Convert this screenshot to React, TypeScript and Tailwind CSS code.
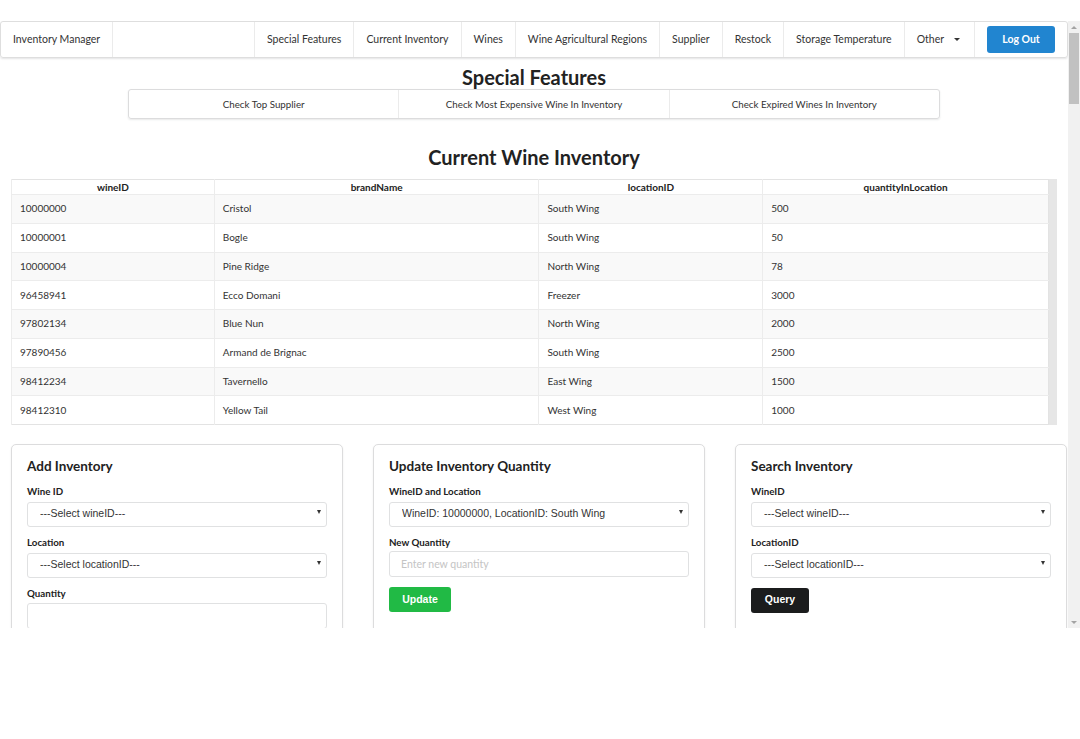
const navLinks = [
  'Special Features',
  'Current Inventory',
  'Wines',
  'Wine Agricultural Regions',
  'Supplier',
  'Restock',
  'Storage Temperature',
];

const features = ['Check Top Supplier', 'Check Most Expensive Wine In Inventory', 'Check Expired Wines In Inventory'];

const inventory = [
  ['10000000', 'Cristol', 'South Wing', '500'],
  ['10000001', 'Bogle', 'South Wing', '50'],
  ['10000004', 'Pine Ridge', 'North Wing', '78'],
  ['96458941', 'Ecco Domani', 'Freezer', '3000'],
  ['97802134', 'Blue Nun', 'North Wing', '2000'],
  ['97890456', 'Armand de Brignac', 'South Wing', '2500'],
  ['98412234', 'Tavernello', 'East Wing', '1500'],
  ['98412310', 'Yellow Tail', 'West Wing', '1000'],
];

const columns = [
  { name: 'wineID', width: 'w-[203px]' },
  { name: 'brandName', width: 'w-[325px]' },
  { name: 'locationID', width: 'w-[224px]' },
  { name: 'quantityInLocation', width: 'w-[286px]' },
];

const arial = { fontFamily: '"Liberation Sans", Arial, sans-serif' };

function Label({ children }: { children: React.ReactNode }) {
  return <div className="text-[9.75px] font-bold text-[#222] leading-none mb-[3px]">{children}</div>;
}

function Select({ value }: { value: string }) {
  return (
    <div className="relative">
      <select
        defaultValue={value}
        className="appearance-none w-full h-[25px] border border-[#e0e1e2] rounded-[3px] bg-white pl-[12px] pr-6 text-[10.5px] text-[#333] outline-none"
        style={arial}
      >
        <option>{value}</option>
      </select>
      <span className="absolute right-[6px] top-[11px] w-0 h-0 border-l-[2.5px] border-r-[2.5px] border-t-[4px] border-l-transparent border-r-transparent border-t-[#333] pointer-events-none" />
    </div>
  );
}

function Input({ placeholder }: { placeholder?: string }) {
  return (
    <input
      placeholder={placeholder}
      className="w-full h-[26px] border border-[#e0e1e2] rounded-[3px] bg-white px-[11px] text-[10.5px] outline-none placeholder:text-[#c4c4c4]"
    />
  );
}

function Card({ title, children }: { title: string; children: React.ReactNode }) {
  return (
    <div className="border border-[#dcdcdd] rounded-[5px] bg-white px-[15px] pt-[15px] pb-[15px] h-[230px] shadow-[0_1px_2px_rgba(34,36,38,0.08)]">
      <h3 className="text-[13.5px] font-bold text-[#222] leading-none mb-[13px]">{title}</h3>
      {children}
    </div>
  );
}

function Gap() {
  return <div className="h-[11px]" />;
}

export default function App() {
  return (
    <div className="w-[1080px] h-[739px] bg-white pt-[21px]" style={{ fontFamily: 'Lato, "Open Sans", sans-serif' }}>
      <div className="flex h-[607px]">
        <div className="flex-1 overflow-hidden">
          {/* Top menu */}
          <nav className="flex items-stretch h-[37px] border border-[#dedede] rounded-[3px] shadow-[0_1px_2px_rgba(34,36,38,0.12)] text-[10.5px] text-[#333]">
            <div className="flex items-center px-[12px] border-r border-[#ebebeb]">Inventory Manager</div>
            <div className="flex-1" />
            {navLinks.map((link) => (
              <div key={link} className="flex items-center px-[12px] border-l border-[#ebebeb]">
                {link}
              </div>
            ))}
            <div className="flex items-center pl-[12px] pr-[14px] border-l border-[#ebebeb] gap-[10px]">
              Other
              <span className="w-0 h-0 border-l-[3px] border-r-[3px] border-t-[3.5px] border-l-transparent border-r-transparent border-t-[#333]" />
            </div>
            <div className="flex items-center px-[12px] border-l border-[#ebebeb]">
              <button className="h-[27px] w-[68px] rounded-[3px] bg-[#2185d0] text-white font-bold text-[10.5px]">Log Out</button>
            </div>
          </nav>

          {/* Special features */}
          <h2 className="text-center text-[20px] font-bold text-[#222] leading-none mt-[9px] mb-[2px]">Special Features</h2>
          <div className="mx-auto w-[812px] h-[30px] flex border border-[#dcdcdd] rounded-[3px] shadow-[0_1px_2px_rgba(34,36,38,0.1)] text-[9.75px] text-[#333]">
            {features.map((f, i) => (
              <button key={f} className={`flex-1 flex items-center justify-center ${i > 0 ? 'border-l border-[#ebebeb]' : ''}`}>
                {f}
              </button>
            ))}
          </div>

          {/* Inventory table */}
          <h2 className="text-center text-[20px] font-bold text-[#222] leading-none mt-[28px] mb-[12px]">Current Wine Inventory</h2>
          <div className="ml-[11px] flex w-[1046px]">
            <table className="w-[1038px] border border-[#e3e3e3] border-collapse text-[10px] text-[#333]">
              <thead>
                <tr className="h-[15px] bg-white">
                  {columns.map((c) => (
                    <th key={c.name} className={`${c.width} font-bold text-[#222] text-center border-l border-[#ececec] leading-none py-0`}>
                      {c.name}
                    </th>
                  ))}
                </tr>
              </thead>
              <tbody>
                {inventory.map((row, i) => (
                  <tr key={row[0]} className={`h-[28.75px] border-t border-[#ececec] ${i % 2 === 0 ? 'bg-[#f9f9f9]' : 'bg-white'}`}>
                    {row.map((cell, j) => (
                      <td key={j} className="pl-[8px] border-l border-[#ececec]">
                        {cell}
                      </td>
                    ))}
                  </tr>
                ))}
              </tbody>
            </table>
            <div className="w-[8px] bg-[#e6e6e6]" />
          </div>

          {/* Forms */}
          <div className="ml-[11px] w-[1056px] mt-[19px] grid grid-cols-3 gap-[30px]">
            <Card title="Add Inventory">
              <Label>Wine ID</Label>
              <Select value="---Select wineID---" />
              <Gap />
              <Label>Location</Label>
              <Select value="---Select locationID---" />
              <Gap />
              <Label>Quantity</Label>
              <Input />
            </Card>
            <Card title="Update Inventory Quantity">
              <Label>WineID and Location</Label>
              <Select value="WineID: 10000000, LocationID: South Wing" />
              <Gap />
              <Label>New Quantity</Label>
              <Input placeholder="Enter new quantity" />
              <button className="mt-[10px] h-[25px] w-[62px] rounded-[3px] bg-[#21ba45] text-white font-bold text-[10.5px]" style={arial}>
                Update
              </button>
            </Card>
            <Card title="Search Inventory">
              <Label>WineID</Label>
              <Select value="---Select wineID---" />
              <Gap />
              <Label>LocationID</Label>
              <Select value="---Select locationID---" />
              <button className="mt-[10px] h-[25px] w-[58px] rounded-[3px] bg-[#1b1c1d] text-white font-bold text-[10.5px]" style={arial}>
                Query
              </button>
            </Card>
          </div>
        </div>

        {/* Page scrollbar */}
        <div className="w-[12px] bg-[#f1f1f1] flex flex-col items-center">
          <div className="h-[12px] flex items-center justify-center">
            <span className="w-0 h-0 border-l-[3px] border-r-[3px] border-b-[3px] border-l-transparent border-r-transparent border-b-[#a3a3a3]" />
          </div>
          <div className="w-[10px] h-[71px] bg-[#c1c1c1]" />
          <div className="flex-1" />
          <div className="h-[12px] flex items-center justify-center">
            <span className="w-0 h-0 border-l-[3px] border-r-[3px] border-t-[3px] border-l-transparent border-r-transparent border-t-[#a3a3a3]" />
          </div>
        </div>
      </div>
    </div>
  );
}
